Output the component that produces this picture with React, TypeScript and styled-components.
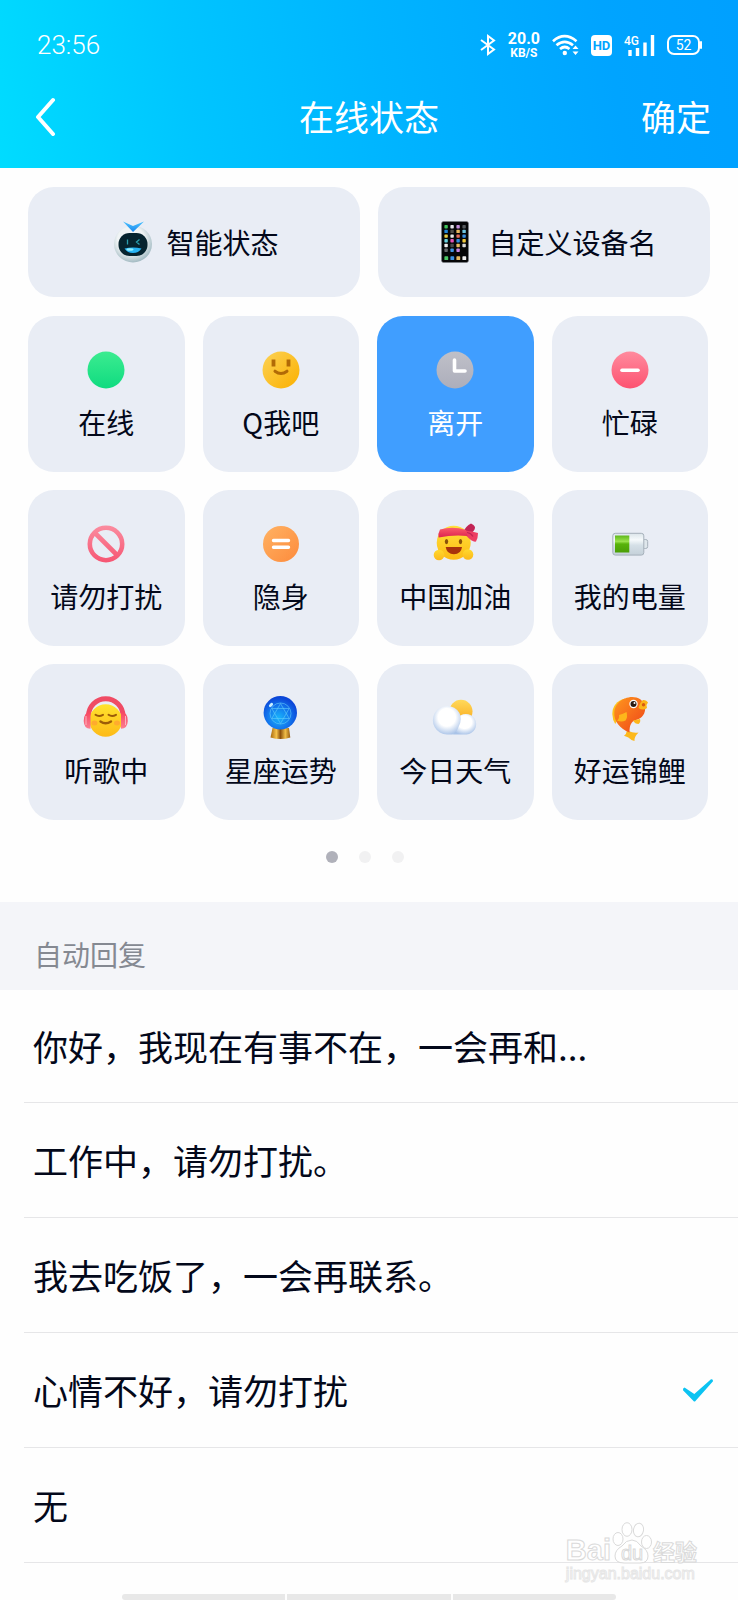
import React, { useState } from "react";
import styled, { createGlobalStyle } from "styled-components";

const GlobalStyle = createGlobalStyle`
  * { box-sizing: border-box; }
  body {
    margin: 0;
    background: #fefefe;
    color: #03081a;
    font-family: "Noto Sans CJK SC", "Noto Sans", sans-serif;
  }
  button { font: inherit; color: inherit; border: 0; padding: 0; background: none; cursor: pointer; }
  svg { display: block; flex: none; }
`;

const Page = styled.div`
  position: relative;
  min-height: 100vh;
  overflow: hidden;
`;

/* ---------- header ---------- */

const Header = styled.header`
  background: linear-gradient(80deg, #00dcff 0%, #00c5ff 26%, #00b4ff 52%, #00a4ff 82%, #00a0ff 100%);
  color: #fff;
`;

const StatusBar = styled.div`
  display: flex;
  align-items: center;
  justify-content: space-between;
  height: 68px;
  padding: 22px 38px 0 37px;
  font-family: Roboto, sans-serif;
`;

const Clock = styled.time`
  font-size: 26px;
  font-weight: 300;
  line-height: 30px;
`;

const Indicators = styled.div`
  display: flex;
  align-items: center;
  gap: 12px;
`;

const Speed = styled.div`
  display: flex;
  flex-direction: column;
  align-items: center;
  font-weight: 700;
`;

const SpeedValue = styled.span`
  font-size: 16px;
  line-height: 16px;
`;

const SpeedUnit = styled.span`
  font-size: 12px;
  line-height: 12px;
`;

const HdBadge = styled.span`
  width: 21px;
  border-radius: 4px;
  background: #fff;
  color: #00a4ff;
  font-size: 13px;
  font-weight: 700;
  line-height: 21px;
  text-align: center;
`;

const Signal = styled.span`
  position: relative;
  width: 31px;
`;

const SignalType = styled.span`
  position: absolute;
  top: 0;
  left: 0;
  font-size: 12px;
  font-weight: 500;
  line-height: 12px;
`;

const BatteryLevel = styled.span`
  position: relative;
  display: flex;
  align-items: center;
  justify-content: center;
  width: 33px;
  height: 20px;
  border: 2px solid #fff;
  border-radius: 7px;
  font-size: 14px;
  line-height: 16px;
  &::after {
    content: "";
    position: absolute;
    right: -4px;
    width: 2px;
    height: 8px;
    border-radius: 1px;
    background: #fff;
  }
`;

const NavBar = styled.nav`
  display: grid;
  grid-template-columns: 1fr auto 1fr;
  align-items: center;
  height: 100px;
  padding: 0 27px 4px;
  font-size: 35px;
  line-height: 48px;
`;

const BackButton = styled.button`
  justify-self: start;
  padding: 0 7px;
`;

const Title = styled.h1`
  margin: 0;
  font: inherit;
`;

const ConfirmButton = styled.button`
  justify-self: end;
`;

/* ---------- status picker ---------- */

const Picker = styled.section`
  display: flex;
  flex-direction: column;
  gap: 19px;
  padding: 19px 28px 0;
`;

const WideRow = styled.div`
  display: grid;
  grid-template-columns: 1fr 1fr;
  gap: 18px;
`;

const TileGrid = styled.div`
  display: grid;
  grid-template-columns: repeat(4, 1fr);
  gap: 18px;
  padding-right: 2px;
`;

const WideTile = styled.button`
  display: flex;
  align-items: center;
  justify-content: center;
  gap: 9px;
  height: 110px;
  border-radius: 26px;
  background: #e9edf5;
  font-size: 28px;
  line-height: 40px;
`;

const Tile = styled.button<{ $active: boolean }>`
  display: flex;
  flex-direction: column;
  align-items: center;
  justify-content: center;
  gap: 8px;
  height: 156px;
  border-radius: 26px;
  background: ${(p) => (p.$active ? "#409eff" : "#e9edf5")};
  color: ${(p) => (p.$active ? "#fff" : "inherit")};
  font-size: 28px;
  line-height: 40px;
`;

const Dots = styled.div`
  display: flex;
  justify-content: center;
  gap: 21px;
  padding: 12px 8px 39px 0;
`;

const Dot = styled.button<{ $active: boolean }>`
  width: 12px;
  height: 12px;
  border-radius: 50%;
  background: ${(p) => (p.$active ? "#b0b1ba" : "#f1f1f2")};
`;

/* ---------- auto reply ---------- */

const SectionTitle = styled.h2`
  margin: 0;
  padding: 32px 34px 16px;
  background: #f4f5f9;
  color: #858992;
  font-size: 28px;
  font-weight: 400;
  line-height: 40px;
`;

const ReplyList = styled.div`
  padding-left: 24px;
`;

const ReplyRow = styled.label`
  display: flex;
  align-items: center;
  justify-content: space-between;
  height: 115px;
  padding: 0 24px 0 9px;
  border-bottom: 1px solid #e6e6e8;
  font-size: 35px;
  line-height: 48px;
  cursor: pointer;
  &:first-child { height: 113px; }
`;

const ReplyRadio = styled.input`
  position: absolute;
  opacity: 0;
  pointer-events: none;
`;

const HomeBar = styled.div`
  display: grid;
  grid-template-columns: repeat(3, 1fr);
  gap: 2px;
  width: 67%;
  margin: 31px auto 0;
  border-radius: 3px;
  overflow: hidden;
`;

const HomeBarPart = styled.span`
  height: 6px;
  background: #e8e8e8;
`;

/* ---------- watermark ---------- */

const Watermark = styled.div`
  position: absolute;
  right: 41px;
  bottom: 16px;
  display: flex;
  flex-direction: column;
  align-items: flex-start;
  color: #fff;
  -webkit-text-stroke: 1px #dadada;
  pointer-events: none;
`;

const WatermarkLogo = styled.div`
  display: flex;
  align-items: flex-end;
  font-weight: 700;
`;

const WatermarkLatin = styled.span`
  font-family: "Liberation Sans", sans-serif;
  font-size: 29px;
  line-height: 28px;
`;

const WatermarkHan = styled.span`
  font-size: 22px;
  line-height: 28px;
`;

const WatermarkUrl = styled.span`
  font-family: "Liberation Sans", sans-serif;
  font-size: 16px;
  line-height: 20px;
  -webkit-text-stroke-color: #e6e6e6;
`;

/* ---------- drawings ---------- */

const Icon = ({ children }: { children: React.ReactNode }) => (
  <svg width="48" height="48" viewBox="0 0 48 48" fill="none" aria-hidden="true">
    {children}
  </svg>
);

const Gradient = ({ id, from, to, slant }: { id: string; from: string; to: string; slant?: boolean }) => (
  <linearGradient id={id} x1="0" y1="0" x2={slant ? "1" : "0"} y2="1">
    <stop offset="0" stopColor={from} />
    <stop offset="1" stopColor={to} />
  </linearGradient>
);

const RobotIcon = () => (
  <Icon>
    <defs>
      <radialGradient id="robot" cx="0.45" cy="0.4" r="0.6">
        <stop offset="0.6" stopColor="#f0f4f5" />
        <stop offset="1" stopColor="#a3bbc3" />
      </radialGradient>
      <Gradient id="robotEar" from="#4cc4ff" to="#1a86ee" />
    </defs>
    <ellipse cx="24" cy="26" rx="19" ry="18.500" fill="url(#robot)" />
    <path d="M14 3.500 24 8l11-4.500L24 14z" fill="url(#robotEar)" />
    <rect x="9.500" y="15" width="29" height="23" rx="11" fill="#06242f" />
    <path d="M18.500 21.500v5M30.500 21.500l-3 2.500 3 2.500" stroke="#2a9fae" strokeWidth="1.300" />
    <path d="M15.500 30.500q8.500-2 17 0-3 4.500-8.500 4.500t-8.500-4.500z" fill="#27b4f4" />
    <ellipse cx="21" cy="31.500" rx="3.500" ry="1.300" fill="#8ff0ff" />
  </Icon>
);

const appColors = [
  ["#3fc45b", "#e6e6ea", "#c58fdc", "#555a5e"],
  ["#2389dd", "#4e4d49", "#e7b95f", "#6fc7e2"],
  ["#e8cf45", "#e9e9e9", "#e06a5c", "#3b8fe0"],
  ["#6ad3df", "#e34fb4", "#2d8be0", "#efc93d"],
  ["#efefef", "#4a4a4a", "#e7b95f", "#dadada"],
  ["#66686b", "#3f94e3", "#c583e0", "#050505"],
];

const PhoneIcon = () => (
  <Icon>
    <rect x="10.500" y="3.500" width="27" height="41" rx="2" fill="#050608" stroke="#7d8188" strokeWidth="0.600" />
    {appColors.map((row, r) =>
      row.map((c, i) => <rect key={`${r}${i}`} x={13.4 + i * 6} y={7 + r * 4.7} width="3.400" height="3.400" rx="0.700" fill={c} />)
    )}
    {["#4cc764", "#3d92e2", "#e7b95f", "#efefef"].map((c, i) => (
      <rect key={c} x={13.4 + i * 6} y="38.300" width="3.800" height="3.800" rx="0.700" fill={c} />
    ))}
  </Icon>
);

const OnlineIcon = () => (
  <Icon>
    <defs><Gradient id="green" from="#3cec90" to="#0fdb80" /></defs>
    <circle cx="24" cy="24" r="18.500" fill="url(#green)" />
  </Icon>
);

const SmileIcon = () => (
  <Icon>
    <defs><Gradient id="smile" from="#fcd255" to="#fbb000" slant /></defs>
    <circle cx="24" cy="24" r="18.500" fill="url(#smile)" />
    <path d="M16.500 15.500v3M31.500 15.500v3" stroke="#b26a06" strokeWidth="3.800" strokeLinecap="square" />
    <path d="M18 25.200q6 4.500 12 0" stroke="#b26a06" strokeWidth="3" strokeLinecap="round" />
  </Icon>
);

const AwayIcon = () => (
  <Icon>
    <defs><Gradient id="away" from="#bfc0c8" to="#acaebb" /></defs>
    <circle cx="24" cy="24" r="18.500" fill="url(#away)" />
    <path d="M23.500 14v11H34" stroke="#fff" strokeWidth="3.600" strokeLinecap="round" strokeLinejoin="round" />
  </Icon>
);

const BusyIcon = () => (
  <Icon>
    <defs><Gradient id="busy" from="#ff8b9e" to="#fd5270" /></defs>
    <circle cx="24" cy="24" r="18.500" fill="url(#busy)" />
    <path d="M16 24.300h16" stroke="#fff" strokeWidth="3.600" strokeLinecap="round" />
  </Icon>
);

const BanIcon = () => (
  <Icon>
    <defs>
      <linearGradient id="ban" gradientUnits="userSpaceOnUse" x1="0" y1="5" x2="0" y2="43">
        <stop offset="0" stopColor="#fb8da0" />
        <stop offset="1" stopColor="#f65572" />
      </linearGradient>
    </defs>
    <circle cx="24" cy="24" r="16.200" stroke="url(#ban)" strokeWidth="4.600" />
    <path d="m13 13 22 22" stroke="url(#ban)" strokeWidth="4.600" />
  </Icon>
);

const HiddenIcon = () => (
  <Icon>
    <defs><Gradient id="hidden" from="#ffb263" to="#fd8b3c" slant /></defs>
    <circle cx="24" cy="24" r="18" fill="url(#hidden)" />
    <path d="M16.500 20.500h15M16.500 27.300h15" stroke="#fff" strokeWidth="3.400" strokeLinecap="round" />
  </Icon>
);

const CheerIcon = () => (
  <Icon>
    <defs>
      <Gradient id="cheer" from="#ffe23c" to="#fdbb14" />
      <Gradient id="hand" from="#ffd92e" to="#fcb81a" />
      <Gradient id="band" from="#fb5b69" to="#dc2350" />
    </defs>
    <circle cx="22.700" cy="22.700" r="17" fill="url(#cheer)" />
    <circle cx="8" cy="35" r="5.300" fill="url(#hand)" />
    <circle cx="37" cy="34.500" r="5.300" fill="url(#hand)" />
    <path d="M32.500 12q2-6 7.500-8.500 3 1 4 3.500.5 4-7 8.500z" fill="#c22455" />
    <path d="M34 10.500q7 .5 13 2.500 0 5-2 8.500-3.500 1-9.500-5.500z" fill="#ec3e63" />
    <path d="M36 12.500q4 .5 6 4" stroke="#c22455" strokeWidth="1.200" />
    <path d="M9 9.500q13-3.500 26 .5l1.500 6q-14-1.500-28.800 1.500-1-4 1.300-8z" fill="url(#band)" />
    <ellipse cx="15.500" cy="21.600" rx="1.700" ry="2.600" fill="#8a5208" />
    <ellipse cx="29.500" cy="21.600" rx="1.700" ry="2.600" fill="#8a5208" />
    <path d="M14.700 27h16.300q-1 7.300-8.100 7.300T14.700 27z" fill="#a8330c" />
  </Icon>
);

const BatteryIcon = () => (
  <Icon>
    <defs>
      <linearGradient id="case" x1="0" y1="0" x2="0" y2="1">
        <stop offset="0" stopColor="#dce5ea" />
        <stop offset="0.300" stopColor="#f6fafc" />
        <stop offset="0.550" stopColor="#d5e0e7" />
        <stop offset="1" stopColor="#c4d0d9" />
      </linearGradient>
      <linearGradient id="charge" x1="0" y1="0" x2="0" y2="1">
        <stop offset="0" stopColor="#5fb81a" />
        <stop offset="0.350" stopColor="#9ae24c" />
        <stop offset="0.500" stopColor="#58b30a" />
        <stop offset="1" stopColor="#4a9e06" />
      </linearGradient>
    </defs>
    <rect x="36.500" y="19.500" width="5.200" height="9" rx="2" fill="#dfe7ec" stroke="#a5b0ba" />
    <rect x="6.800" y="13.300" width="31" height="21.800" rx="2.500" fill="url(#case)" stroke="#a5b0ba" />
    <rect x="9" y="15.500" width="14.300" height="17" fill="url(#charge)" />
  </Icon>
);

const MusicIcon = () => (
  <Icon>
    <defs>
      <Gradient id="music" from="#ffe32e" to="#fdba18" />
      <Gradient id="phones" from="#f7455f" to="#fb7f92" />
    </defs>
    <path d="M6.500 22a17.200 17.200 0 0 1 34.500 0" stroke="#f04b64" strokeWidth="5" />
    <circle cx="23.700" cy="26.500" r="16.300" fill="url(#music)" />
    <ellipse cx="12.500" cy="29" rx="3" ry="2.500" fill="#ffab2e" />
    <ellipse cx="35" cy="29" rx="3" ry="2.500" fill="#ffab2e" />
    <path d="M8.500 17.500v17.300Q2 35 1.700 27 1.800 18 8.500 17.500zM39 17.500v17.300q6.500 0 6.800-7.800 0-9-6.800-9.500z" fill="url(#phones)" />
    <path d="M4 22v9M43.500 22v9" stroke="#fdb2bd" />
    <path d="M13.500 20.800q3.500 2.500 7.500 0M26.500 20.800q3.500 2.500 7.500 0" stroke="#9c5c08" strokeWidth="2" strokeLinecap="round" />
    <path d="M18.500 27.500q5 3.500 10.500 0" stroke="#9c5c08" strokeWidth="2.400" strokeLinecap="round" />
  </Icon>
);

const CrystalIcon = () => (
  <Icon>
    <defs>
      <radialGradient id="orb" cx="0.450" cy="0.650" r="0.600">
        <stop offset="0" stopColor="#19b4fb" />
        <stop offset="0.600" stopColor="#1273ec" />
        <stop offset="1" stopColor="#0b46d8" />
      </radialGradient>
      <linearGradient id="stand" x1="0" y1="0" x2="1" y2="0">
        <stop offset="0" stopColor="#a8680f" />
        <stop offset="0.300" stopColor="#f5c14a" />
        <stop offset="0.500" stopColor="#8c500c" />
        <stop offset="0.750" stopColor="#f0bd48" />
        <stop offset="1" stopColor="#94590e" />
      </linearGradient>
    </defs>
    <path d="M15.500 34h16.500l1.300 9.500q-9.500 3-19.800 0z" fill="url(#stand)" />
    <circle cx="23.300" cy="18.700" r="16.700" fill="url(#orb)" />
    <g stroke="#63cdfa" strokeWidth="0.600">
      <circle cx="23.500" cy="19.500" r="10.500" />
      <path d="m23.500 9.500 8.700 15H14.800zM23.500 29.500l-8.700-15h17.400z" />
    </g>
    <ellipse cx="14" cy="11" rx="2.500" ry="1.500" transform="rotate(-45 14 11)" fill="#c9efff" />
  </Icon>
);

const WeatherIcon = () => (
  <Icon>
    <defs>
      <Gradient id="sun" from="#ffd95a" to="#f9a91c" />
      <radialGradient id="cloud" cx="0.500" cy="0.400" r="0.620">
        <stop offset="0.500" stopColor="#fff" />
        <stop offset="1" stopColor="#a9c3e8" />
      </radialGradient>
    </defs>
    <circle cx="30" cy="17.300" r="11.500" fill="url(#sun)" />
    <path d="M22 40.500h13.500A10.300 10.300 0 1 0 26 25z" fill="url(#cloud)" />
    <path d="M16 40.500A14.300 14.300 0 1 1 28.500 19q3 7-1 14-1.500 5-6 7.500z" fill="url(#cloud)" />
  </Icon>
);

const KoiIcon = () => (
  <Icon>
    <defs>
      <Gradient id="koi" from="#ff981e" to="#ee4218" slant />
    </defs>
    <path d="M19 4.500Q6.500 8 6.300 20q.2 6 3 10l7-14z" fill="#fdc21c" />
    <path d="M21 36.500q-.5 3.500-3 5.200 5 1.300 7.500 4.300l3 1q-.5-4 4-8.500-5 1-10-1.500z" fill="#fcb91c" />
    <path d="M19 4.500c8-3.500 18-1 20 8 1 7-3 12-9 13.500-5 1.500-6.500 5.500-6.500 12.500C14 35 7.500 27 8.300 18c.7-7 5.200-11.500 10.700-13.500z" fill="url(#koi)" />
    <path d="M32.500 14q1.500-6 4.500-8 3.500-.5 5 2.500l-1.500 2.500.5 3q-4 3-8.500 0z" fill="#fcb51a" />
    <circle cx="37.500" cy="10.800" r="1.700" fill="#d95a10" />
    <path d="M13 21q4-1 7.500-3 1.500 5-1 8.500-4 2-8.500 0 2.500-2 2-5.500zM27 26.500q2 3.500 5.500 3.500 2.500-2 1.500-5z" fill="#fdb61b" />
    <circle cx="27.500" cy="10" r="4.200" fill="#fff" />
    <circle cx="27.500" cy="10" r="3" fill="#2a1a14" />
    <circle cx="28.500" cy="8.900" r="1" fill="#fff" />
  </Icon>
);

const BluetoothIcon = () => (
  <svg width="16" height="22" viewBox="0 0 16 22" fill="none" stroke="#fff" strokeWidth="2" aria-label="蓝牙">
    <path d="m1 6 13 9.500-6 4.500V2l6 4.500L1 16" />
  </svg>
);

const WifiIcon = () => (
  <svg width="27" height="22" viewBox="0 0 27 22" fill="none" stroke="#fff" strokeWidth="2.700" aria-label="无线网络">
    <path d="M1 7.200q11.500-10 23.500 0M4.500 11.300q8.200-6.800 16.500 0M8 15q4.800-4 9.500 0" />
    <circle cx="12.800" cy="19" r="2.200" fill="#fff" stroke="none" />
    <path d="m20.500 15 3-3.500 3 3.500zM20.500 17.500l3 3.500 3-3.500z" fill="#fff" stroke="none" />
  </svg>
);

const SignalBars = () => (
  <svg width="31" height="21" viewBox="0 0 31 21" stroke="#fff" strokeWidth="3.400" aria-hidden="true">
    <path d="M6 15v6M13.500 13v8M21 7.500v13.500M28.500 0v21" />
  </svg>
);

const CheckIcon = () => (
  <svg width="32" height="24" viewBox="0 0 32 24" aria-hidden="true">
    <path d="M2.500 9.500 12.300 16 29 1.200q2.300-.3 2 2L13 23.500h-1L1 12.200q-.4-2.200 1.500-2.700z" fill="#0bc3f2" />
  </svg>
);

const PawIcon = () => (
  <svg width="42" height="42" viewBox="0 0 42 42" fill="#fff" stroke="#dadada" strokeWidth="1" aria-hidden="true">
    <ellipse cx="7" cy="17" rx="5" ry="6.500" />
    <ellipse cx="16" cy="7.500" rx="5" ry="6.800" />
    <ellipse cx="27.500" cy="8" rx="5" ry="6.800" transform="rotate(10 27.500 8)" />
    <ellipse cx="35.500" cy="20" rx="5" ry="6.500" />
    <path d="M21 18q5 0 9 6 7 4 7 10 0 7-8 7H13q-9 0-9-7 0-6 7-10 4-6 10-6z" />
    <text x="21" y="38" textAnchor="middle" fontFamily="Liberation Sans, sans-serif" fontWeight="400" fontSize="20">du</text>
  </svg>
);

/* ---------- data ---------- */

const statuses = [
  { label: "在线", Drawing: OnlineIcon },
  { label: "Q我吧", Drawing: SmileIcon },
  { label: "离开", Drawing: AwayIcon },
  { label: "忙碌", Drawing: BusyIcon },
  { label: "请勿打扰", Drawing: BanIcon },
  { label: "隐身", Drawing: HiddenIcon },
  { label: "中国加油", Drawing: CheerIcon },
  { label: "我的电量", Drawing: BatteryIcon },
  { label: "听歌中", Drawing: MusicIcon },
  { label: "星座运势", Drawing: CrystalIcon },
  { label: "今日天气", Drawing: WeatherIcon },
  { label: "好运锦鲤", Drawing: KoiIcon },
];

const replies = ["你好，我现在有事不在，一会再和...", "工作中，请勿打扰。", "我去吃饭了，一会再联系。", "心情不好，请勿打扰", "无"];

export default function App() {
  const [status, setStatus] = useState("离开");
  const [page, setPage] = useState(0);
  const [reply, setReply] = useState(3);

  return (
    <Page lang="zh-CN">
      <GlobalStyle />
      <Header>
        <StatusBar>
          <Clock>23:56</Clock>
          <Indicators>
            <BluetoothIcon />
            <Speed>
              <SpeedValue>20.0</SpeedValue>
              <SpeedUnit>KB/S</SpeedUnit>
            </Speed>
            <WifiIcon />
            <HdBadge>HD</HdBadge>
            <Signal>
              <SignalType>4G</SignalType>
              <SignalBars />
            </Signal>
            <BatteryLevel>52</BatteryLevel>
          </Indicators>
        </StatusBar>
        <NavBar>
          <BackButton aria-label="返回">
            <svg width="24" height="40" viewBox="0 0 24 40" fill="none" stroke="#fff" strokeWidth="4" strokeLinecap="round" strokeLinejoin="round">
              <path d="M19 4 4 21 19 38" />
            </svg>
          </BackButton>
          <Title>在线状态</Title>
          <ConfirmButton>确定</ConfirmButton>
        </NavBar>
      </Header>

      <Picker>
        <WideRow>
          <WideTile><RobotIcon />智能状态</WideTile>
          <WideTile><PhoneIcon />自定义设备名</WideTile>
        </WideRow>
        <TileGrid>
          {statuses.map(({ label, Drawing }) => (
            <Tile key={label} $active={status === label} aria-pressed={status === label} onClick={() => setStatus(label)}>
              <Drawing />
              {label}
            </Tile>
          ))}
        </TileGrid>
        <Dots>
          {[0, 1, 2].map((i) => (
            <Dot key={i} $active={page === i} aria-label={`第${i + 1}页`} onClick={() => setPage(i)} />
          ))}
        </Dots>
      </Picker>

      <SectionTitle>自动回复</SectionTitle>
      <ReplyList role="radiogroup" aria-label="自动回复">
        {replies.map((text, i) => (
          <ReplyRow key={text}>
            <ReplyRadio type="radio" name="reply" checked={reply === i} onChange={() => setReply(i)} />
            {text}
            {reply === i && <CheckIcon />}
          </ReplyRow>
        ))}
      </ReplyList>

      <HomeBar>
        <HomeBarPart />
        <HomeBarPart />
        <HomeBarPart />
      </HomeBar>

      <Watermark>
        <WatermarkLogo>
          <WatermarkLatin>Bai</WatermarkLatin>
          <PawIcon />
          <WatermarkHan>经验</WatermarkHan>
        </WatermarkLogo>
        <WatermarkUrl>jingyan.baidu.com</WatermarkUrl>
      </Watermark>
    </Page>
  );
}
